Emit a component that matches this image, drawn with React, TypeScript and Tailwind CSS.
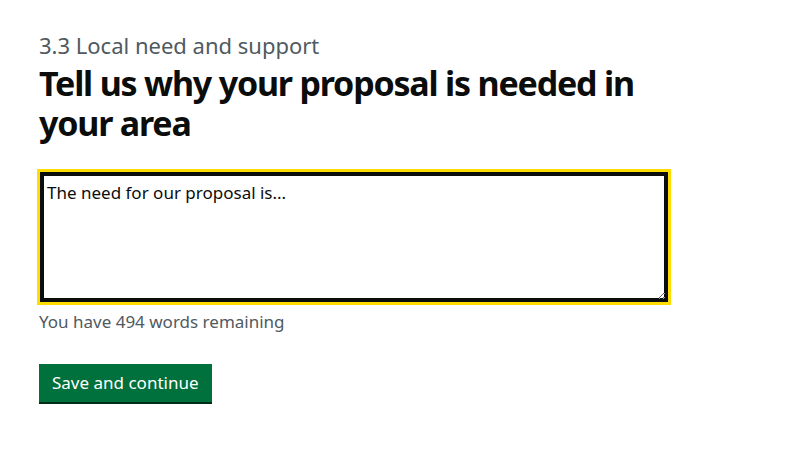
import { useState } from 'react'

/* ─── Page ──────────────────────────────────────────────────────────────── */

const FONT = { fontFamily: '"Noto Sans", Arial, sans-serif' }

export default function App() {
  const [value, setValue] = useState('The need for our proposal is...')

  return (
    <div className="min-h-screen w-full bg-white text-[#0b0c0c]" style={FONT}>
      <main className="px-[39px] pt-[30px]">
        {/* Caption + heading */}
        <span className="mb-[3px] block text-[22px] leading-[30px] text-[#505a5f]">3.3 Local need and support</span>
        <h1 className="w-[620px] text-[34px] leading-[40px] font-bold tracking-[-1.2px]">
          Tell us why your proposal is needed in your area
        </h1>

        {/* Character count textarea */}
        <div className="mt-[29px]">
          <textarea
            value={value}
            onChange={(e) => setValue(e.target.value)}
            className="ml-px block h-[130px] w-[628px] resize-y border-2 border-[#0b0c0c] px-[5px] py-[6px] text-[17px] leading-[25px] text-[#0b0c0c] outline-[3px] outline-[#ffdd00] outline-solid shadow-[inset_0_0_0_2px_#0b0c0c]"
          />
          <div className="mt-[7px] text-[17px] leading-[25px] text-[#505a5f]">You have 494 words remaining</div>
        </div>

        {/* Submit */}
        <button className="mt-[30px] flex h-[38px] items-center bg-[#00703c] px-[13px] text-[17px] text-white shadow-[0_2px_0_#002d18]">
          Save and continue
        </button>
      </main>
    </div>
  )
}
